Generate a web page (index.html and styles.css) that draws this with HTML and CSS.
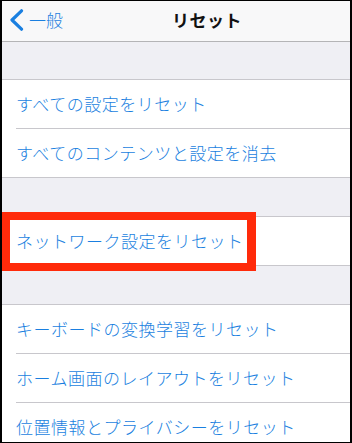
FILE: index.html
```html
<!DOCTYPE html>
<html lang="ja">
<head>
<meta charset="utf-8">
<title>リセット</title>
<link rel="stylesheet" href="styles.css">
</head>
<body>
<div class="frame">
  <header class="nav">
    <div class="back">
      <svg class="chev" width="15" height="22" viewBox="0 0 15 22"><path d="M12.5 1.8 L3 11 L12.5 20.2" fill="none" stroke="#1a7fe0" stroke-width="3.2" stroke-linecap="round" stroke-linejoin="round"/></svg>
      <span>一般</span>
    </div>
    <div class="title">リセット</div>
  </header>
  <div class="gap gap-top"></div>
  <ul class="group">
    <li class="row">すべての設定をリセット</li>
    <li class="row">すべてのコンテンツと設定を消去</li>
  </ul>
  <div class="gap"></div>
  <ul class="group">
    <li class="row">ネットワーク設定をリセット<span class="mark"></span></li>
  </ul>
  <div class="gap"></div>
  <ul class="group">
    <li class="row">キーボードの変換学習をリセット</li>
    <li class="row">ホーム画面のレイアウトをリセット</li>
    <li class="row">位置情報とプライバシーをリセット</li>
  </ul>
</div>
</body>
</html>
```
FILE: styles.css
```css
html, body {
  margin: 0;
  padding: 0;
  background: #000;
}
.frame {
  width: 352px;
  height: 443px;
  box-sizing: border-box;
  border-style: solid;
  border-color: #000;
  border-width: 1px 2px 1px 2px;
  background: #efeff4;
  overflow: hidden;
  font-family: "Noto Sans CJK JP", "Noto Sans", sans-serif;
}
.nav {
  height: 40px;
  background: #f8f8f9;
  border-bottom: 1px solid #b4b4b6;
  display: flex;
  align-items: center;
  position: relative;
}
.back {
  display: flex;
  align-items: center;
  color: #1a7fe0;
  font-size: 17px;
  font-weight: 300;
  padding-left: 7px;
  padding-bottom: 3px;
  gap: 5px;
}
.chev {
  display: block;
}
.title {
  position: absolute;
  left: 170px;
  top: 0;
  height: 40px;
  line-height: 37px;
  font-size: 17px;
  font-weight: 700;
  color: #111;
  letter-spacing: 0.5px;
}
.gap {
  height: 38px;
}
.gap-top {
  height: 37px;
}
.group {
  list-style: none;
  margin: 0;
  padding: 0;
  background: #fff;
  border-top: 1px solid #c8c7cc;
  border-bottom: 1px solid #c8c7cc;
}
.row {
  height: 48px;
  line-height: 48px;
  margin-left: 14px;
  font-size: 17px;
  font-weight: 300;
  letter-spacing: 0.5px;
  color: #1a7fe0;
  white-space: nowrap;
  position: relative;
}
.row + .row {
  border-top: 1px solid #c8c7cc;
}
.mark {
  position: absolute;
  left: -14px;
  top: -5px;
  width: 254px;
  height: 59px;
  box-sizing: border-box;
  border: 8px solid #ff2a0a;
  border-right-width: 9px;
}
```
